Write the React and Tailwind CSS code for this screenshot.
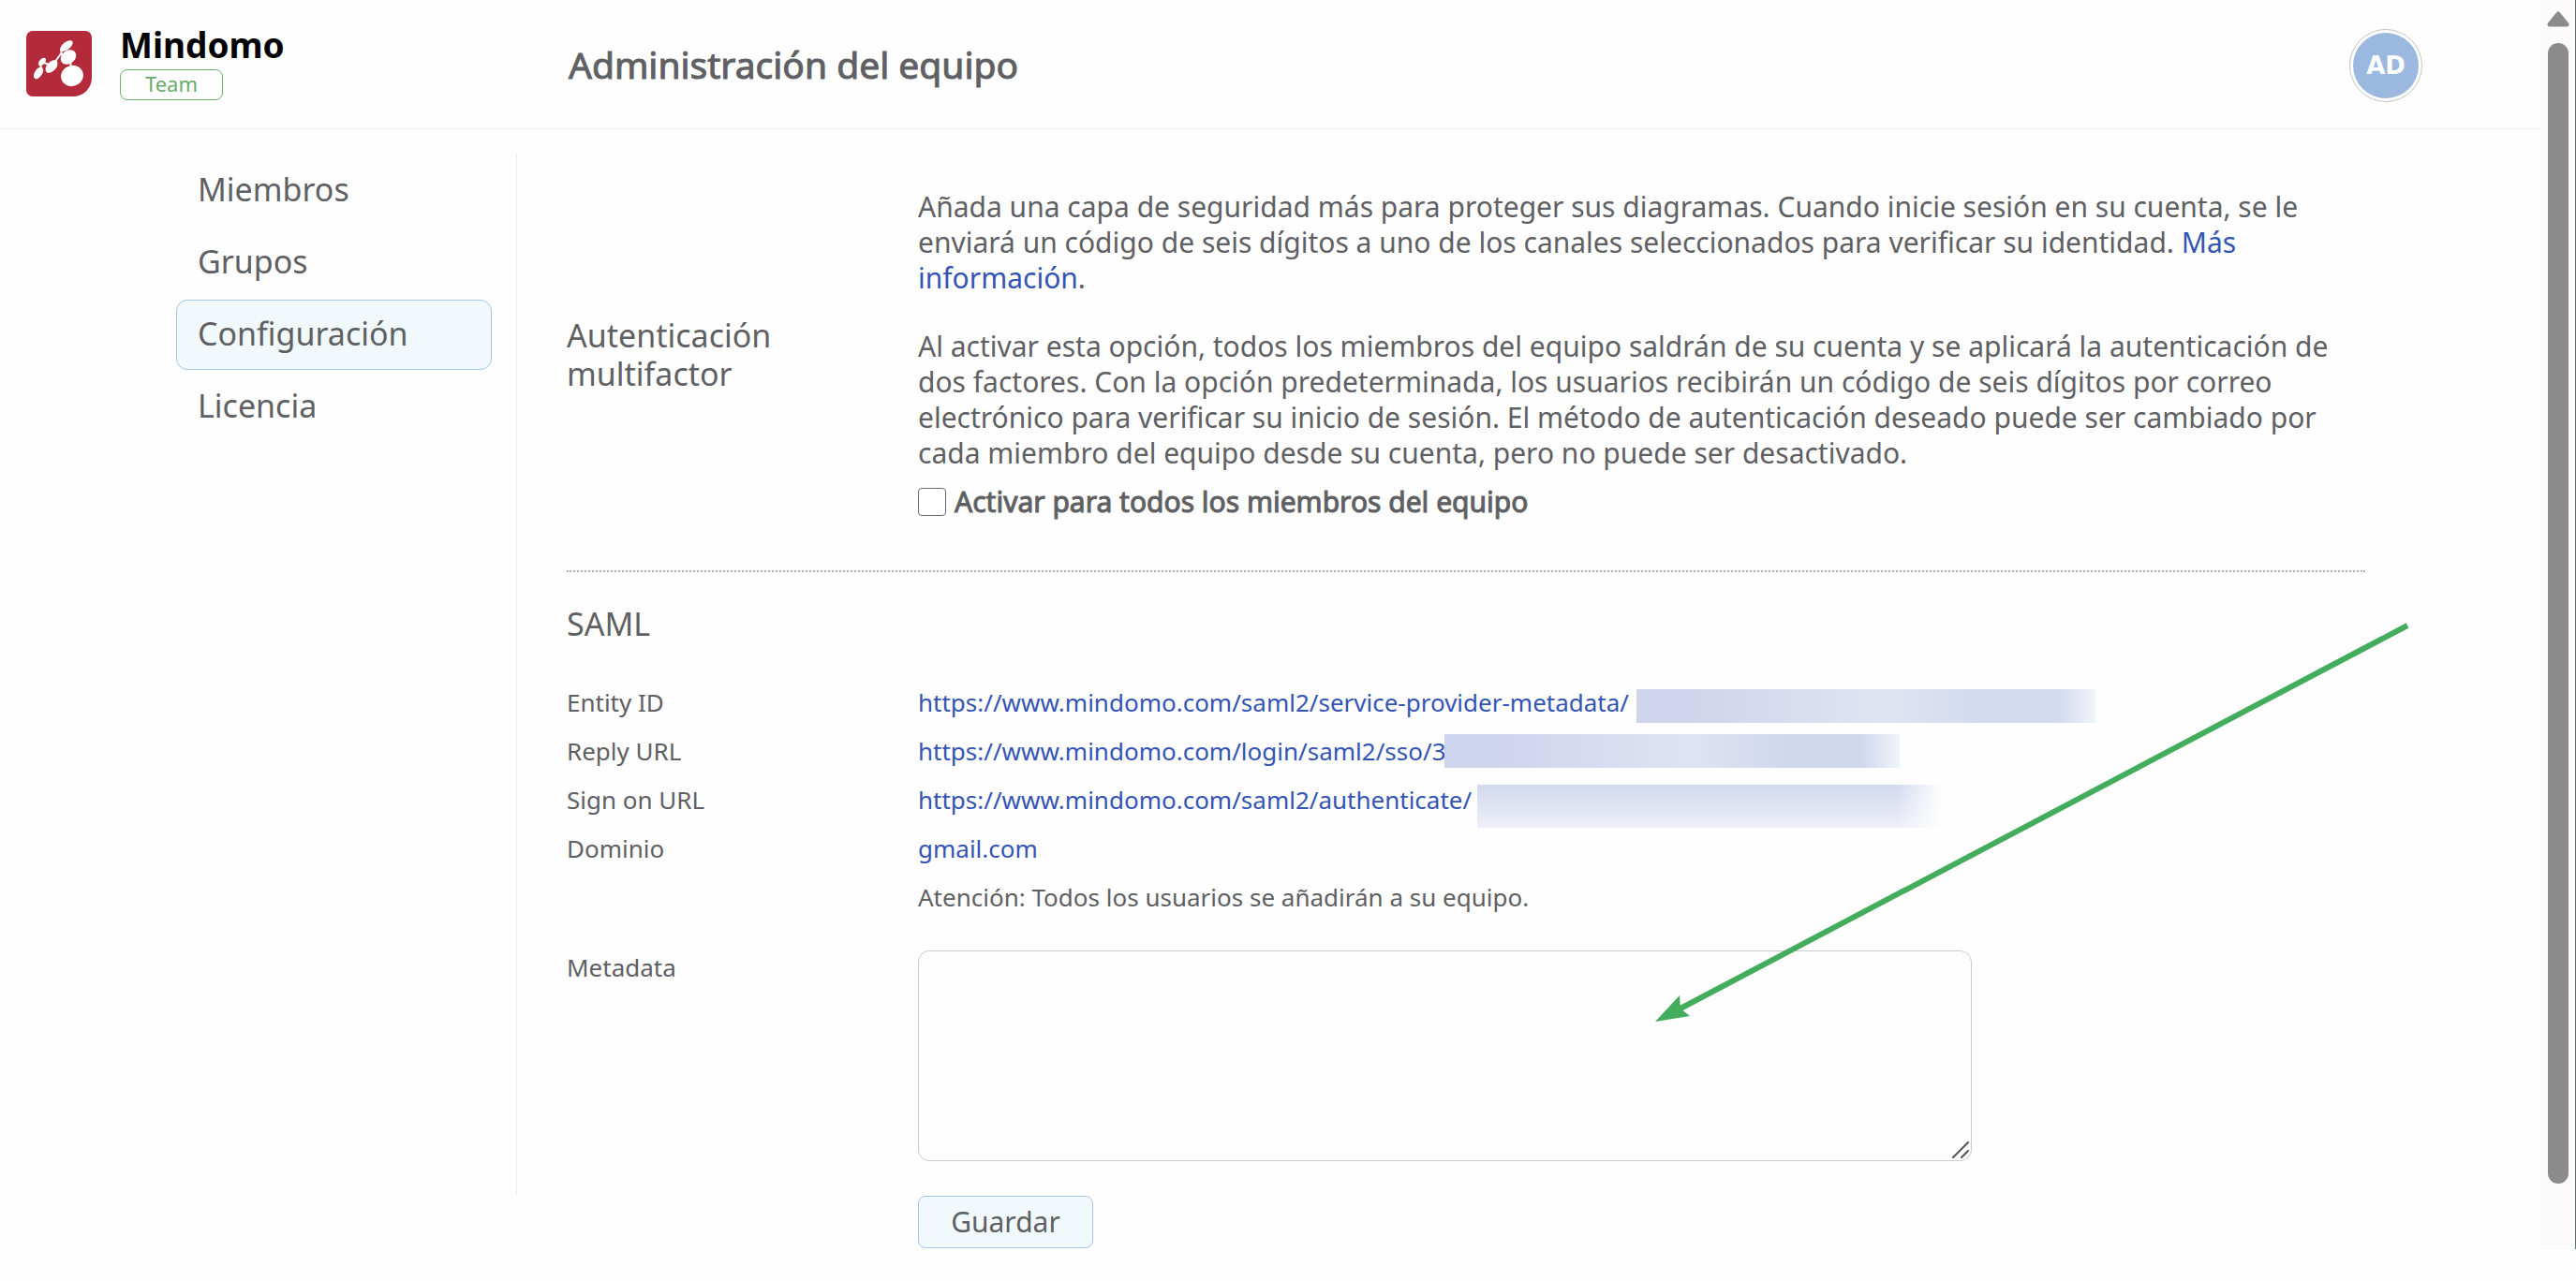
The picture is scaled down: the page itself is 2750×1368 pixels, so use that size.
const NAV = ["Miembros", "Grupos", "Configuración", "Licencia"];

const LINKS = [
  {
    label: "Entity ID",
    url: "https://www.mindomo.com/saml2/service-provider-metadata/",
    mask: "ml-2 mt-1 w-[490px] h-9 bg-linear-to-r from-[#cfd4ec] from-10% via-[#e0e4f2] via-55% to-[#d2daee] to-75%",
    fade: "w-10 from-[#d2daee]/0 to-[#f1f4fb]",
  },
  {
    label: "Reply URL",
    url: "https://www.mindomo.com/login/saml2/sso/3",
    mask: "-ml-0.5 w-[486px] h-9 bg-linear-to-r from-[#cfd4ee] from-10% via-[#dfe3f2] via-55% to-[#d0d8ed] to-75%",
    fade: "w-10 from-[#d0d8ed]/0 to-[#f1f4fb]",
  },
  {
    label: "Sign on URL",
    url: "https://www.mindomo.com/saml2/authenticate/",
    mask: "ml-1.5 mt-0.5 w-[496px] h-[46px] bg-linear-to-b from-[#d2daee] to-[#eeeff8]",
    fade: "w-12 from-[#fefefe]/0 to-[#fefefe]",
  },
];

function Logo() {
  return (
    <svg className="size-[70px]" viewBox="0 0 70 70" aria-hidden="true">
      <path d="M7 0H63a7 7 0 0 1 7 7V50a20 20 0 0 1-20 20H7a7 7 0 0 1-7-7V7a7 7 0 0 1 7-7Z" fill="#b32b3b" />
      <g fill="#fff">
        <ellipse cx="49" cy="48" rx="12" ry="11" transform="rotate(-20 49 48)" />
        <ellipse cx="45" cy="28" rx="9" ry="7" transform="rotate(-38 45 28)" />
        <ellipse cx="43" cy="16" rx="8" ry="4" transform="rotate(-38 43 16)" />
        <ellipse cx="27" cy="38" rx="8" ry="5" transform="rotate(-48 27 38)" />
        <ellipse cx="13" cy="45" rx="7" ry="4" transform="rotate(-58 13 45)" />
        <ellipse cx="17" cy="33" rx="5" ry="3" transform="rotate(-48 17 33)" />
      </g>
      <path d="M48 40 47 32M38 26 37 19M30 34 38 23M16 40 15 35M19 34l5 2" stroke="#fff" strokeWidth="2" fill="none" />
    </svg>
  );
}

export default function App() {
  return (
    <div className="relative flex min-h-screen bg-[#fefefe] font-['Noto_Sans',sans-serif] text-[#5f6063]">
      <div className="flex min-w-0 flex-1 flex-col">
        <header className="flex h-[138px] items-center border-b border-[#ececec] pt-0.5 pr-[126px] pl-7">
          <div className="flex w-[579px] gap-[30px]">
            <Logo />
            <div className="flex flex-col items-start gap-[11px]">
              <span className="text-[37px] leading-[30px] font-bold text-black">Mindomo</span>
              <span className="flex h-[33px] w-[110px] items-center justify-center rounded-lg border border-[#6ab070] pb-0.5 text-[22px] text-[#6aab6e]">
                Team
              </span>
            </div>
          </div>
          <h1 className="flex-1 text-[39px] [-webkit-text-stroke:1px_currentColor]">Administración del equipo</h1>
          <button className="flex size-[78px] items-center justify-center rounded-full border border-[#c4c4c4] bg-white">
            <span className="flex size-[70px] items-center justify-center rounded-full bg-[#9bb8df] font-['DejaVu_Sans',sans-serif] text-[26px] leading-none font-bold text-white">
              AD
            </span>
          </button>
        </header>
        <div className="flex flex-1 pt-[26px]">
          <nav className="flex h-[1111px] w-[552px] shrink-0 flex-col gap-0.5 border-r border-[#ececec] pt-0.5 pr-[26px] pl-[188px]">
            {NAV.map((item) => (
              <a
                key={item}
                href="#"
                aria-current={item === "Configuración" ? "page" : undefined}
                className="flex h-[75px] items-center rounded-xl border border-transparent px-[22px] pb-0.5 text-[34px] aria-[current=page]:border-[#a5c8ea] aria-[current=page]:bg-[#f1f9fd]"
              >
                {item}
              </a>
            ))}
          </nav>
          <main className="mr-[187px] ml-[53px] min-w-0 flex-1 pt-[38px]">
            <section className="grid grid-cols-[375px_1fr] items-center border-b-2 border-dotted border-[#b5b5b5] pb-[54px]">
              <h2 className="text-[34px] leading-[41px]">
                Autenticación
                <br />
                multifactor
              </h2>
              <div className="text-[30px] leading-[38px]">
                <p>
                  Añada una capa de seguridad más para proteger sus diagramas. Cuando inicie sesión en su cuenta, se le enviará un código de seis
                  dígitos a uno de los canales seleccionados para verificar su identidad.{" "}
                  <a href="#" className="text-[#3454b4]">Más información</a>.
                </p>
                <p className="mt-[35px]">
                  Al activar esta opción, todos los miembros del equipo saldrán de su cuenta y se aplicará la autenticación de dos factores. Con la
                  opción predeterminada, los usuarios recibirán un código de seis dígitos por correo electrónico para verificar su inicio de
                  sesión. El método de autenticación deseado puede ser cambiado por cada miembro del equipo desde su cuenta, pero no puede ser
                  desactivado.
                </p>
                <label className="mt-[14px] flex items-center gap-[9px] [-webkit-text-stroke:1px_currentColor]">
                  <input type="checkbox" className="size-[30px] appearance-none rounded-sm border border-[#6b6b6b] bg-white" />
                  Activar para todos los miembros del equipo
                </label>
              </div>
            </section>
            <section className="pt-[31px] text-[26px] leading-[36px]">
              <h2 className="mb-[42px] text-[34px] leading-[48px]">SAML</h2>
              <dl className="grid grid-cols-[375px_1fr] gap-y-4">
                {LINKS.map(({ label, url, mask, fade }) => (
                  <div key={label} className="col-span-2 grid grid-cols-subgrid">
                    <dt>{label}</dt>
                    <dd className="flex h-9 text-[#3454b4]">
                      <a href="#">{url}</a>
                      <span className={`flex justify-end ${mask}`}>
                        <span className={`bg-linear-to-r ${fade}`} />
                      </span>
                    </dd>
                  </div>
                ))}
                <dt>Dominio</dt>
                <dd><a href="#" className="text-[#3454b4]">gmail.com</a></dd>
                <dd className="col-start-2">Atención: Todos los usuarios se añadirán a su equipo.</dd>
              </dl>
              <form className="mt-[39px] grid grid-cols-[375px_1fr]" onSubmit={(e) => e.preventDefault()}>
                <label htmlFor="metadata">Metadata</label>
                <div className="relative w-[1125px]">
                  <textarea id="metadata" className="block h-[225px] w-full resize-none rounded-xl border border-[#cccccc] bg-[#fefefe] p-3 outline-none" />
                  <svg className="pointer-events-none absolute right-[3px] bottom-[3px] size-[18px]" viewBox="0 0 18 18" stroke="#555" strokeWidth="2" strokeLinecap="round">
                    <path d="M1 17 17 1M10 17l7-7" />
                  </svg>
                </div>
                <button className="col-start-2 mt-[37px] h-[56px] w-[187px] rounded-lg border border-[#a5c8ea] bg-[#f1f9fd] text-[30px]">Guardar</button>
              </form>
            </section>
          </main>
        </div>
      </div>
      <div className="mb-[34px] flex w-[38px] shrink-0 flex-col items-center border-r border-[#5d7070] bg-[#fbfbfb] pt-3">
        <svg className="h-[18px] w-6" viewBox="0 0 24 18" fill="#8b8b8b" stroke="#8b8b8b" strokeWidth="5" strokeLinejoin="round">
          <path d="M3 14 12 3l9 11Z" />
        </svg>
        <div className="mt-4 h-[1218px] w-[22px] rounded-full bg-[#8b8b8b]" />
      </div>
      <svg className="pointer-events-none absolute top-[664px] left-[1764px] h-[430px] w-[810px]" viewBox="1764 664 810 430">
        <path d="M2570 668 1792 1078" stroke="#43ad5d" strokeWidth="6" />
        <path d="M1767 1091 1793 1063 1794 1077 1804 1085Z" fill="#43ad5d" />
      </svg>
    </div>
  );
}
